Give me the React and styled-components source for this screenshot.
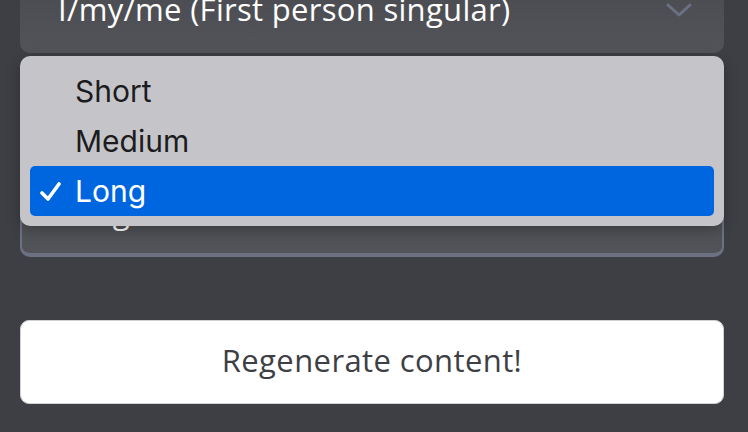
import React, { useState } from 'react'
import styled, { createGlobalStyle } from 'styled-components'

const GlobalStyle = createGlobalStyle`
html, body {
  margin:0;
  padding:0;
  background:#3e3f45;
  overflow:hidden;
}
body {
  font-family:"Open Sans", "Liberation Sans", sans-serif;
}
`

const Page = styled.div`
position:relative;
width:748px;
height:432px;
padding:0 24px 0 20px;
box-sizing:border-box;
display:flex;
flex-direction:column;
`
const SelectBox = styled.div`
position:relative;
flex:none;
height:74px;
margin-top:${props => props.first ? "-21px" : "0"};
box-sizing:border-box;
border-radius:10px;
background:linear-gradient(180deg, #4a4b50 0%, #535459 100%);
border:${props => props.focused ? "2px solid #6c7184" : "none"};
border-bottom-width:${props => props.focused ? "4px" : "0"};
display:flex;
align-items:center;
padding-left:${props => props.focused ? "36px" : "38px"};
padding-bottom:14px;
color:#ffffff;
font-size:31px;
letter-spacing:0.3px;
`
const SelectText = styled.span`
line-height:1;
`
const Chevron = styled.svg`
position:absolute;
right:32px;
top:23px;
`
const Label = styled.div`
flex:none;
height:130px;
`
const Spacer = styled.div`
flex:none;
height:63px;
`
const Button = styled.button`
flex:none;
height:84px;
width:100%;
background:#ffffff;
border:1.5px solid #cfd0d4;
border-radius:9px;
font-family:"Open Sans", "Liberation Sans", sans-serif;
font-size:31px;
letter-spacing:0.4px;
color:#3e3f45;
padding:0 0 4px;
cursor:pointer;
`
const Menu = styled.div`
position:absolute;
left:20px;
top:56px;
width:704px;
height:170px;
box-sizing:border-box;
padding:10px;
background:#c5c5c9;
border-radius:10px;
box-shadow:0 4px 14px rgba(0,0,0,0.25);
display:flex;
flex-direction:column;
`
const Option = styled.div`
position:relative;
height:50px;
flex:none;
display:flex;
align-items:center;
padding-left:45px;
border-radius:5px;
font-family:Inter, "Liberation Sans", sans-serif;
font-size:30px;
background:${props => props.selected ? "#0066e0" : "transparent"};
color:${props => props.selected ? "#ffffff" : "#1c1c1e"};
`
const Check = styled.svg`
position:absolute;
left:10px;
top:16px;
`

const options = ["Short", "Medium", "Long"]

const App = () => {
  const [length, setLength] = useState("Long")
  return (
    <>
      <GlobalStyle />
      <Page>
        <SelectBox first>
          <SelectText>I/my/me (First person singular)</SelectText>
          <Chevron width="26" height="16" viewBox="0 0 26 16">
            <polyline points="2,3 13,13 24,3" fill="none" stroke="#6b7184" strokeWidth="3" strokeLinecap="round" strokeLinejoin="round" />
          </Chevron>
        </SelectBox>
        <Label />
        <SelectBox focused>
          <SelectText>{length}</SelectText>
        </SelectBox>
        <Spacer />
        <Button>Regenerate content!</Button>
        <Menu>
          {options.map(o => (
            <Option key={o} selected={o === length} onClick={() => setLength(o)}>
              {o === length && (
                <Check width="22" height="20" viewBox="0 0 22 20">
                  <path d="M2 11 L8 17 L19 2" fill="none" stroke="#ffffff" strokeWidth="3.6" strokeLinecap="round" strokeLinejoin="round" />
                </Check>
              )}
              {o}
            </Option>
          ))}
        </Menu>
      </Page>
    </>
  )
}

export default App
